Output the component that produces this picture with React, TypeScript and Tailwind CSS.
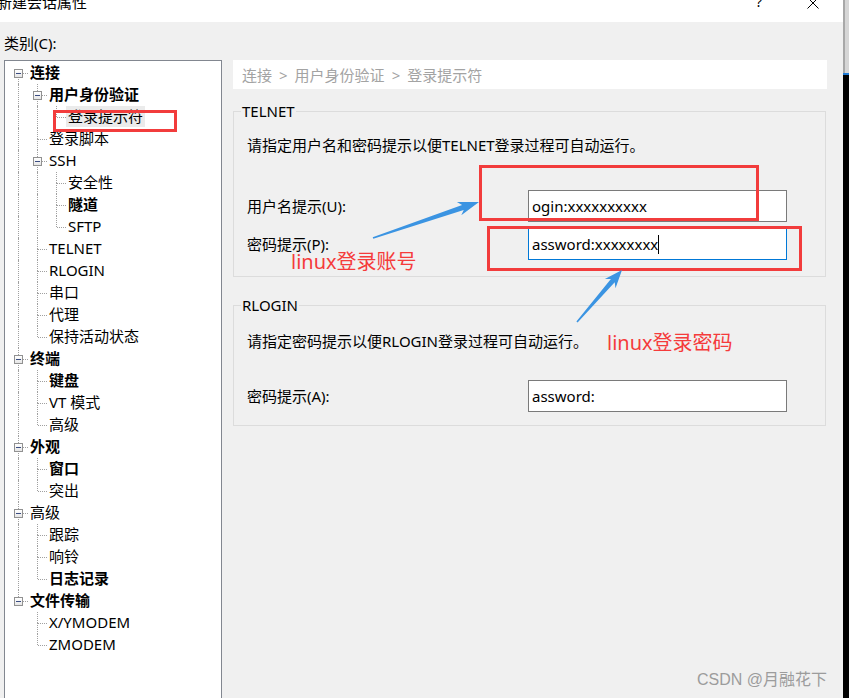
import type { ReactNode } from 'react';

type Node = { t: string; b?: boolean; sel?: boolean; c?: Node[] };

const TREE: Node[] = [
  {
    t: '连接',
    b: true,
    c: [
      { t: '用户身份验证', b: true, c: [{ t: '登录提示符', sel: true }] },
      { t: '登录脚本' },
      { t: 'SSH', c: [{ t: '安全性' }, { t: '隧道', b: true }, { t: 'SFTP' }] },
      { t: 'TELNET' },
      { t: 'RLOGIN' },
      { t: '串口' },
      { t: '代理' },
      { t: '保持活动状态' },
    ],
  },
  { t: '终端', b: true, c: [{ t: '键盘', b: true }, { t: 'VT 模式' }, { t: '高级' }] },
  { t: '外观', b: true, c: [{ t: '窗口', b: true }, { t: '突出' }] },
  { t: '高级', c: [{ t: '跟踪' }, { t: '响铃' }, { t: '日志记录', b: true }] },
  { t: '文件传输', b: true, c: [{ t: 'X/YMODEM' }, { t: 'ZMODEM' }] },
];

type Row = {
  node: Node;
  level: number;
  lines: boolean[]; // ancestors that still have siblings below
  first: boolean;
  hasNext: boolean;
};

function flatten(nodes: Node[], level: number, lines: boolean[], out: Row[]) {
  nodes.forEach((n, i) => {
    const hasNext = i < nodes.length - 1;
    out.push({ node: n, level, lines, first: level === 0 && i === 0, hasNext });
    if (n.c) flatten(n.c, level + 1, [...lines, hasNext], out);
  });
  return out;
}

const ROWS = flatten(TREE, 0, [], []);

function TreeRow({ row }: { row: Row }) {
  const cells: ReactNode[] = [];
  for (let l = 0; l <= row.level; l++) {
    const own = l === row.level;
    cells.push(
      <div key={l} className="relative w-[19px] h-full shrink-0">
        {!own && row.lines[l] && (
          <div className="absolute left-[9px] top-0 bottom-0 border-l border-dotted border-[#a0a0a0]" />
        )}
        {own && (
          <>
            {!row.first && (
              <div className="absolute left-[9px] top-0 h-[11px] border-l border-dotted border-[#a0a0a0]" />
            )}
            {row.hasNext && (
              <div className="absolute left-[9px] top-[11px] bottom-0 border-l border-dotted border-[#a0a0a0]" />
            )}
            <div className="absolute left-[10px] right-0 top-[11px] border-t border-dotted border-[#a0a0a0]" />
            {row.node.c && (
              <div className="absolute left-[5px] top-[7px] w-[9px] h-[9px] border border-[#919191] bg-gradient-to-b from-white to-[#e6e6e6]">
                <div className="absolute left-[1px] top-[3px] w-[5px] h-[1px] bg-[#3b4d82]" />
              </div>
            )}
          </>
        )}
      </div>,
    );
  }
  return (
    <div className="flex h-[22px] items-center">
      {cells}
      <span
        className={`px-[2px] leading-[21px] -mt-[1px] whitespace-nowrap ${row.node.b ? 'font-bold' : ''} ${
          row.node.sel ? 'bg-[#ebebeb]' : ''
        }`}
      >
        {row.node.t}
      </span>
    </div>
  );
}

function Field({ label, value, focused, caret }: { label: string; value: string; focused?: boolean; caret?: boolean }) {
  return (
    <div className="flex items-center">
      <div className="w-[281px] leading-[20px]">{label}</div>
      <div
        className={`w-[259px] h-[32px] bg-white border pl-[3px] flex items-center ${
          focused ? 'border-[#0078d7]' : 'border-[#7a7a7a]'
        }`}
      >
        <span className="leading-[20px]">{value}</span>
        {caret && <span className="w-[1px] h-[19px] bg-black" />}
      </div>
    </div>
  );
}

export default function App() {
  return (
    <div className="relative w-[849px] h-[698px] overflow-hidden flex bg-white text-[15px] text-black font-['Noto_Sans','Noto_Sans_CJK_SC',sans-serif]">
      <div className="w-[843px] flex flex-col bg-[#f0f0f0]">
        {/* title bar */}
        <div className="h-[22px] bg-white flex items-start overflow-hidden shrink-0">
          <span className="-mt-[8px] -ml-[3px] leading-[20px]">新建会话属性</span>
          <span className="ml-auto -mt-[8px] leading-[20px] text-[14px]">?</span>
          <svg className="ml-[45px] mr-[24px] -mt-[3px]" width="12" height="12" viewBox="0 0 12 12">
            <path d="M0.5 0.5 L11.5 11.5 M11.5 0.5 L0.5 11.5" stroke="#000" strokeWidth="1" />
          </svg>
        </div>

        <div className="pl-[4px] pt-[11px] flex flex-col flex-1">
          <div className="leading-[20px]">类别(C):</div>
          <div className="flex mt-[7px] flex-1">
            <div className="w-[218px] border border-b-0 border-[#828790] bg-white pt-[1px] pl-[4px]">
              {ROWS.map((r, i) => (
                <TreeRow key={i} row={r} />
              ))}
            </div>

            <div className="ml-[11px] w-[594px] flex flex-col">
              <div className="h-[29px] bg-white pl-[9px] flex items-center text-[#a3a3a3] leading-[20px]">
                <span>连接</span>
                <span className="mx-[7px]">&gt;</span>
                <span>用户身份验证</span>
                <span className="mx-[7px]">&gt;</span>
                <span>登录提示符</span>
              </div>

              <fieldset className="mt-[12px] w-[593px] border border-[#dcdcdc]">
                <legend className="ml-[7px] px-[1px] leading-[20px]">TELNET</legend>
                <div className="pl-[13px] pb-[16px]">
                  <div className="pt-[14px] leading-[20px]">请指定用户名和密码提示以便TELNET登录过程可自动运行。</div>
                  <div className="mt-[35px]">
                    <Field label="用户名提示(U):" value="ogin:xxxxxxxxxx" />
                  </div>
                  <div className="mt-[6px]">
                    <Field label="密码提示(P):" value="assword:xxxxxxxx" focused caret />
                  </div>
                </div>
              </fieldset>

              <fieldset className="mt-[18px] w-[593px] border border-[#dcdcdc]">
                <legend className="ml-[7px] px-[1px] leading-[20px]">RLOGIN</legend>
                <div className="pl-[13px] pb-[13px]">
                  <div className="pt-[16px] leading-[20px]">请指定密码提示以便RLOGIN登录过程可自动运行。</div>
                  <div className="mt-[29px]">
                    <Field label="密码提示(A):" value="assword:" />
                  </div>
                </div>
              </fieldset>
            </div>
          </div>
        </div>
      </div>

      {/* edge of the window behind */}
      <div className="w-[6px] flex flex-col">
        <div className="h-[73px] flex">
          <div className="w-[2px] bg-[#a8a8a8]" />
          <div className="flex-1 bg-[#d6d6d6]" />
        </div>
        <div className="h-[2px] bg-[#1e7bd6]" />
        <div className="flex-1 bg-black" />
      </div>

      {/* annotations */}
      <div className="absolute left-[53px] top-[110px] w-[124px] h-[22px] border-[3px] border-[#f23c3c]" />
      <div className="absolute left-[479px] top-[165px] w-[280px] h-[56px] border-[3px] border-[#f23c3c]" />
      <div className="absolute left-[487px] top-[226px] w-[315px] h-[45px] border-[3px] border-[#f23c3c]" />
      <div className="absolute left-[291px] top-[250px] text-[20px] leading-[24px] text-[#f53b3b]">linux登录账号</div>
      <div className="absolute left-[607px] top-[331px] text-[20px] leading-[24px] text-[#f53b3b]">linux登录密码</div>
      <svg className="absolute left-0 top-0 pointer-events-none" width="849" height="698">
        <polygon
          fill="#3b94e2"
          points="372.7,237.2 462.1,205.1 456.9,202.1 479,202 461.3,215.3 463.7,209.9 373.3,238.8"
        />
        <polygon
          fill="#3b94e2"
          points="576.4,321.5 610.9,279.0 604.9,279.0 622,270 615.5,288.2 614.7,282.2 577.6,322.5"
        />
      </svg>
      <div className="absolute left-[697px] top-[669px] text-[16px] leading-[22px] text-[#9c9c9c] font-['Liberation_Sans','Noto_Sans_CJK_SC',sans-serif]">
        CSDN @月融花下
      </div>
    </div>
  );
}
